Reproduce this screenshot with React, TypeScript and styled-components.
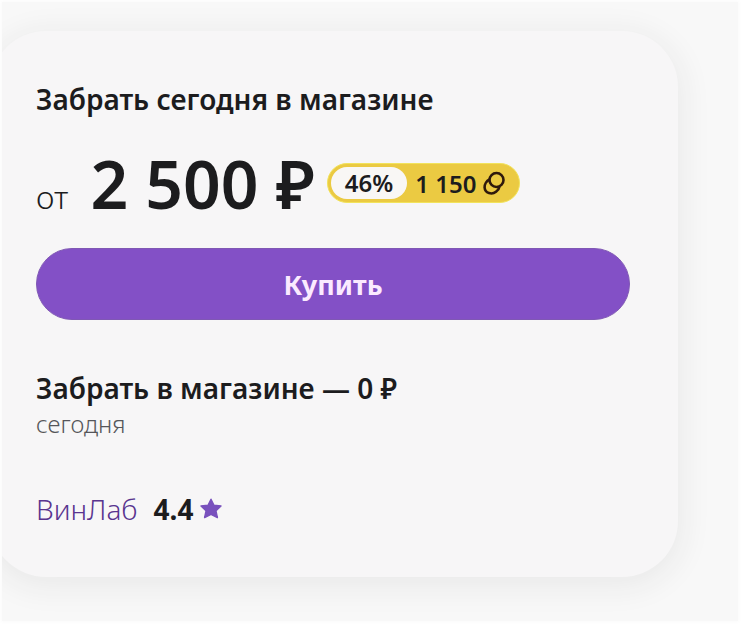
import React from "react";
import styled, { createGlobalStyle } from "styled-components";

const GlobalStyle = createGlobalStyle`
  * { box-sizing: border-box; }
  body {
    margin: 0;
    background: #fff;
    color: #1c1c1e;
    font-family: "Noto Sans", "Open Sans", sans-serif;
  }
`;

const Page = styled.main`
  padding: 2px 6px 8px 2px;
`;

const Backdrop = styled.div`
  padding: 29px 60px 44px 0;
  overflow: hidden;
  background: #f8f8f8;
  box-shadow: 0 0 4px 1px #fafafa;
`;

const Card = styled.section`
  margin-left: -12px;
  padding: 49px 48px 48px 46px;
  border-radius: 56px;
  background: #f7f6f7;
  box-shadow: 0 6px 32px 4px rgba(40, 40, 44, 0.07);
`;

const Title = styled.h2`
  margin: 0;
  font-size: 28px;
  font-weight: 600;
  line-height: 38px;
  white-space: nowrap;
`;

const PriceRow = styled.div`
  display: flex;
  align-items: center;
  height: 92px;
  margin-top: 19px;
`;

const Price = styled.div`
  display: flex;
  align-items: baseline;
  gap: 22px;
  white-space: nowrap;
`;

const Prefix = styled.span`
  font-size: 32px;
  font-weight: 300;
`;

const Amount = styled.strong`
  font-size: 66px;
  font-weight: 600;
  line-height: 92px;
`;

const Bonus = styled.div`
  display: flex;
  align-items: center;
  height: 40px;
  margin-left: 12px;
  padding: 3px 14px 3px 3px;
  border: 1px solid #f2e35c;
  border-radius: 20px;
  background: #ebca42;
  font-size: 24px;
  font-weight: 600;
  white-space: nowrap;
`;

const Percent = styled.span`
  padding: 0 14px;
  border-radius: 16px;
  background: #f9f7f5;
  line-height: 32px;
`;

const Points = styled.span`
  display: flex;
  align-items: center;
  gap: 7px;
  margin-left: 8px;
`;

const BuyButton = styled.button`
  display: block;
  width: 100%;
  height: 72px;
  margin-top: 19px;
  padding: 0;
  border: 1px solid #8058b4;
  border-radius: 36px;
  background: #8350c6;
  color: #fbeaff;
  font: inherit;
  font-size: 27px;
  font-weight: 700;
  cursor: pointer;
`;

const Pickup = styled.div`
  margin-top: 49px;
`;

const PickupDate = styled.p`
  margin: 0;
  color: #56565a;
  font-size: 24px;
  font-weight: 300;
  line-height: 34px;
`;

const Seller = styled.div`
  display: flex;
  align-items: center;
  margin-top: 48px;
  line-height: 40px;
`;

const SellerLink = styled.a`
  color: #59348f;
  font-size: 28px;
  font-weight: 300;
  text-decoration: none;
`;

const Rating = styled.span`
  display: flex;
  align-items: center;
  gap: 7px;
  margin-left: 16px;
  font-size: 28px;
  font-weight: 700;
`;

function CoinsIcon() {
  return (
    <svg width="22" height="26" viewBox="0 0 22 26" fill="none" stroke="#2e190c" strokeWidth="2.6" aria-hidden="true">
      <circle cx="13.500" cy="10" r="7" />
      <path d="M6.500 9.500C3.500 11 1.400 14.500 1.600 17.500C2 23.500 9 25 13 21.800C15.200 20 16.200 18.500 16.500 16.500" />
    </svg>
  );
}

function StarIcon() {
  return (
    <svg
      width="22"
      height="22"
      viewBox="0 0 22 22"
      fill="#7951bd"
      stroke="#7951bd"
      strokeWidth="1.4"
      strokeLinejoin="round"
      aria-hidden="true"
    >
      <path d="M11 1.200L14 7.200L21 8L16 12.800L17.400 19.600L11 16.400L4.600 19.600L6 12.800L1 8L8 7.200Z" />
    </svg>
  );
}

export default function App() {
  return (
    <>
      <GlobalStyle />
      <Page>
        <Backdrop>
          <Card>
            <Title>Забрать сегодня в магазине</Title>
            <PriceRow>
              <Price>
                <Prefix>от</Prefix>
                <Amount>2 500 ₽</Amount>
              </Price>
              <Bonus>
                <Percent>46%</Percent>
                <Points>
                  1 150
                  <CoinsIcon />
                </Points>
              </Bonus>
            </PriceRow>
            <BuyButton type="button">Купить</BuyButton>
            <Pickup>
              <Title as="h3">Забрать в магазине — 0 ₽</Title>
              <PickupDate>сегодня</PickupDate>
            </Pickup>
            <Seller>
              <SellerLink href="#seller">ВинЛаб</SellerLink>
              <Rating>
                4.4
                <StarIcon />
              </Rating>
            </Seller>
          </Card>
        </Backdrop>
      </Page>
    </>
  );
}
